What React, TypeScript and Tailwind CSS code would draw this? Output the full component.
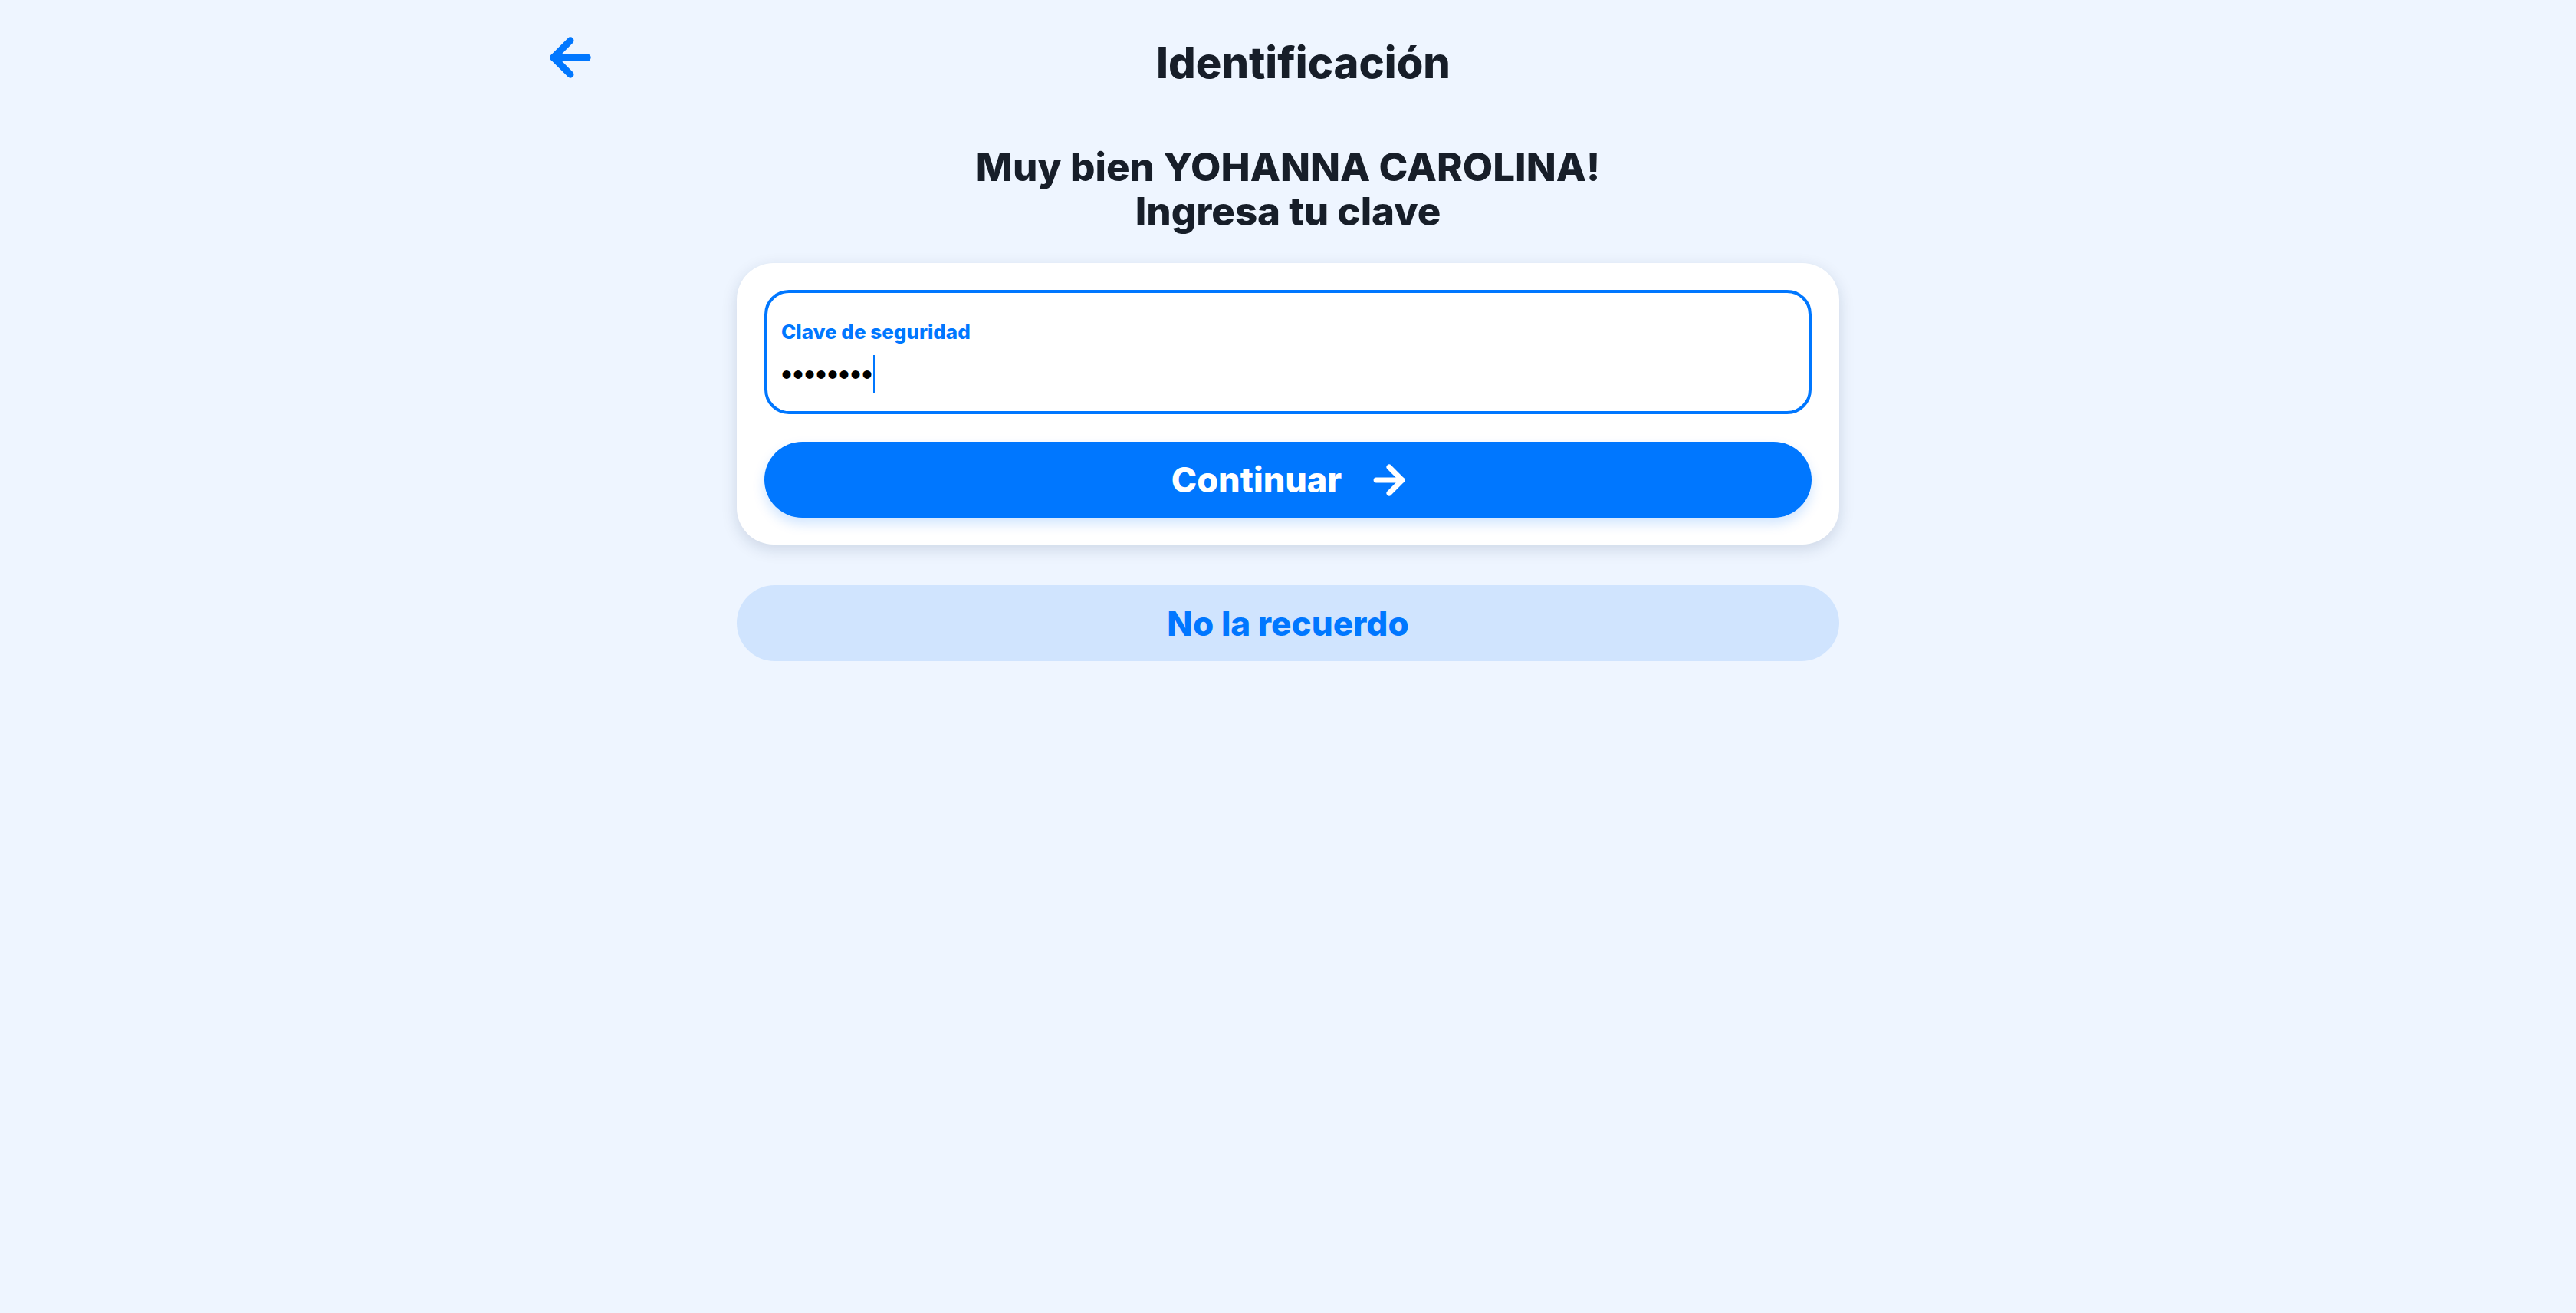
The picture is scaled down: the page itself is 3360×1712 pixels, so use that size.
import React from "react";
import { ArrowLeft, ArrowRight } from "lucide-react";

export default function App() {
  return (
    <div
      className="min-h-screen w-full bg-[#eef5ff] flex flex-col items-center"
      style={{ fontFamily: "Inter, 'Noto Sans', sans-serif" }}
    >
      <header className="w-[1952px] flex items-start pt-[37px]">
        <button className="w-[80px] h-[76px] flex items-center justify-center text-[#0077ff]">
          <ArrowLeft size={76} strokeWidth={2.84} />
        </button>
        <h1 className="flex-1 text-center mt-[17px] text-[56px] leading-none font-extrabold text-[#171e29]">
          Identificación
        </h1>
        <div className="w-[40px]" />
      </header>

      <h2 className="mt-[76px] text-center text-[51px] leading-[58px] font-extrabold text-[#171e29]">
        Muy bien YOHANNA CAROLINA!
        <br />
        Ingresa tu clave
      </h2>

      <div className="mt-[38px] w-[1438px] bg-white rounded-[48px] px-[36px] py-[35px] shadow-[0_6px_20px_rgba(15,40,80,0.15)] flex flex-col gap-[36px]">
        <div className="h-[162px] rounded-[32px] border-4 border-[#0077ff] bg-white px-[18px] pt-[37px] flex flex-col">
          <label className="text-[26px] leading-[28px] font-extrabold text-[#0077ff]">
            Clave de seguridad
          </label>
          <div className="mt-[16px] h-[49px] flex items-center">
            <span
              className="text-[40px] leading-none text-black tracking-[1px]"
              style={{ fontFamily: "'Liberation Sans', sans-serif" }}
            >
              ••••••••
            </span>
            <span className="w-[2px] h-[49px] bg-[#0077ff]" />
          </div>
        </div>

        <button className="h-[99px] w-full rounded-full bg-[#0077ff] text-white flex items-center justify-center gap-[33px] pl-[9px] shadow-[0_8px_16px_rgba(0,119,255,0.18)]">
          <span className="text-[45px] leading-none font-extrabold">Continuar</span>
          <ArrowRight size={58} strokeWidth={2.9} />
        </button>
      </div>

      <button className="mt-[53px] w-[1438px] h-[99px] rounded-full bg-[#d0e4fe] text-[#0077ff] text-[44px] leading-none font-extrabold flex items-center justify-center">
        No la recuerdo
      </button>
    </div>
  );
}
